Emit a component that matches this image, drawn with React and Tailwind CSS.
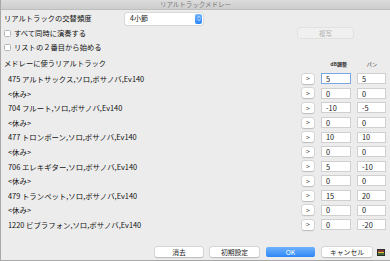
const FONT = { fontFamily: '"Noto Sans CJK JP", "Noto Sans", sans-serif' };

const rows = [
  { name: '475 アルトサックス,ソロ,ボサノバ,Ev140', db: '5', pan: '5', focus: true },
  { name: '<休み>', db: '0', pan: '0' },
  { name: '704 フルート,ソロ,ボサノバ,Ev140', db: '-10', pan: '-5' },
  { name: '<休み>', db: '0', pan: '0' },
  { name: '477 トロンボーン,ソロ,ボサノバ,Ev140', db: '10', pan: '10' },
  { name: '<休み>', db: '0', pan: '0' },
  { name: '706 エレキギター,ソロ,ボサノバ,Ev140', db: '5', pan: '-10' },
  { name: '<休み>', db: '0', pan: '0' },
  { name: '479 トランペット,ソロ,ボサノバ,Ev140', db: '15', pan: '20' },
  { name: '<休み>', db: '0', pan: '0' },
  { name: '1220 ビブラフォン,ソロ,ボサノバ,Ev140', db: '0', pan: '-20' },
];

function Check({ label }) {
  return (
    <div className="flex items-center h-[14.5px]">
      <div className="w-[7px] h-[7px] rounded-[1.5px] bg-white border border-[#b5b5b5]" />
      <span className="ml-[3px] text-[7.3px] leading-none text-[#111]">{label}</span>
    </div>
  );
}

function Field({ value, focus, w }) {
  return (
    <div
      className={`h-[11px] ${w} bg-white flex items-center pl-[4px] text-[7.4px] leading-none text-[#222] ${
        focus ? 'border-[1.5px] border-[#7aa7e6]' : 'border border-[#d0d0d0]'
      }`}
    >
      {value}
    </div>
  );
}

function Button({ children, w, primary }) {
  return (
    <div
      className={`h-[10px] ${w} rounded-[2px] flex items-center justify-center text-[6.8px] leading-none ${
        primary
          ? 'bg-gradient-to-b from-[#6fb2fb] to-[#2a86f6] text-white'
          : 'bg-white text-[#222] shadow-[0_0_0_0.5px_#c4c4c4,0_0.5px_1px_#bbb]'
      }`}
    >
      {children}
    </div>
  );
}

export default function App() {
  return (
    <div style={FONT} className="w-[390px] h-[261px] bg-[#ececec] border-l border-b border-[#a8a8a8] flex flex-col overflow-hidden">
      <div className="h-[10px] bg-gradient-to-b from-[#dcdcdc] to-[#cdcdcd] border-b border-[#bdbdbd] flex items-center justify-center">
        <span className="text-[6.5px] leading-none text-[#7a7a7a]">リアルトラックメドレー</span>
      </div>

      <div className="flex-1 flex flex-col pl-[3px] pr-[4px]">
        <div className="flex items-center h-[15px] mt-[1px]">
          <span className="w-[121px] text-[7.3px] leading-none text-[#111]">リアルトラックの交替頻度</span>
          <div className="w-[78px] h-[12px] bg-white rounded-[2px] shadow-[0_0_0_0.5px_#c4c4c4] flex items-center justify-between">
            <span className="pl-[5px] text-[7px] leading-none text-[#222]">4小節</span>
            <div className="w-[7px] h-[10px] mr-[1px] rounded-[2px] bg-gradient-to-b from-[#6fb2fb] to-[#2a86f6] flex flex-col items-center justify-center gap-[1px]">
              <svg width="4" height="2" viewBox="0 0 4 2"><path d="M0.5 1.8 L2 0.3 L3.5 1.8" stroke="white" strokeWidth="0.7" fill="none" /></svg>
              <svg width="4" height="2" viewBox="0 0 4 2"><path d="M0.5 0.2 L2 1.7 L3.5 0.2" stroke="white" strokeWidth="0.7" fill="none" /></svg>
            </div>
          </div>
        </div>

        <div className="flex items-center justify-between">
          <Check label="すべて同時に演奏する" />
          <div className="w-[55px] h-[10px] mr-[33px] rounded-[2px] bg-[#f0f0f0] shadow-[0_0_0_0.5px_#d6d6d6] flex items-center justify-center text-[6.5px] leading-none text-[#b0b0b0]">
            複写
          </div>
        </div>
        <Check label="リストの２番目から始める" />

        <div className="flex items-end h-[15px]">
          <span className="flex-1 text-[7.3px] leading-none text-[#111] pb-[3px]">メドレーに使うリアルトラック</span>
          <span className="w-[34px] text-[5px] leading-none text-[#333] font-bold pb-[4px] mr-[10px] text-right">dB調整</span>
          <span className="w-[20px] text-[5px] leading-none text-[#333] pb-[4px] mr-[9px] text-right">パン</span>
        </div>

        <div className="flex flex-col mt-[1.5px]">
          {rows.map((r, i) => (
            <div key={i} className="flex items-center h-[14.6px]">
              <span className="flex-1 pl-[4px] text-[7.4px] leading-none text-[#111]">{r.name}</span>
              <Button w="w-[12px]">&gt;</Button>
              <div className="ml-[7px]">
                <Field value={r.db} focus={r.focus} w="w-[30px]" />
              </div>
              <div className="ml-[6px]">
                <Field value={r.pan} w="w-[29px]" />
              </div>
            </div>
          ))}
        </div>

        <div className="mt-auto mb-[3px] flex items-center justify-end gap-[7px] pr-[1px]">
          <Button w="w-[48px]">消去</Button>
          <Button w="w-[49px]">初期設定</Button>
          <Button w="w-[49px]" primary>OK</Button>
          <Button w="w-[50px]">キャンセル</Button>
          <svg width="8" height="7" viewBox="0 0 8 7" className="ml-[-2px]">
            <rect x="0" y="0" width="8" height="7" fill="#2b2b2b" />
            <rect x="1" y="1.5" width="6" height="1" fill="#e2453c" />
            <rect x="1" y="3" width="6" height="1" fill="#e8c23a" />
            <rect x="1" y="4.5" width="6" height="1" fill="#5ab24a" />
          </svg>
        </div>
      </div>
    </div>
  );
}
